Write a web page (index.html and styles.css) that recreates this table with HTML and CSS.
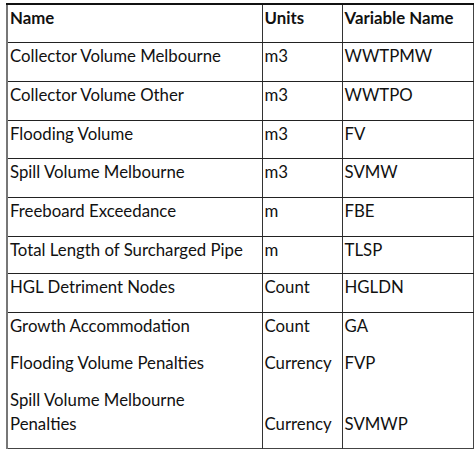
FILE: index.html
```html
<!DOCTYPE html>
<html>
<head>
<meta charset="utf-8">
<link rel="stylesheet" href="styles.css">
</head>
<body>
<table class="vars">
  <colgroup>
    <col class="c-name">
    <col class="c-units">
    <col class="c-var">
  </colgroup>
  <thead>
    <tr class="head">
      <th>Name</th><th>Units</th><th>Variable Name</th>
    </tr>
  </thead>
  <tbody>
    <tr class="row"><td>Collector Volume Melbourne</td><td>m3</td><td>WWTPMW</td></tr>
    <tr class="row"><td>Collector Volume Other</td><td>m3</td><td>WWTPO</td></tr>
    <tr class="row r38"><td>Flooding Volume</td><td>m3</td><td>FV</td></tr>
    <tr class="row"><td>Spill Volume Melbourne</td><td>m3</td><td>SVMW</td></tr>
    <tr class="row"><td>Freeboard Exceedance</td><td>m</td><td>FBE</td></tr>
    <tr class="row r37"><td>Total Length of Surcharged Pipe</td><td>m</td><td>TLSP</td></tr>
    <tr class="row"><td>HGL Detriment Nodes</td><td>Count</td><td>HGLDN</td></tr>
    <tr class="open"><td>Growth Accommodation</td><td>Count</td><td>GA</td></tr>
    <tr class="open"><td>Flooding Volume Penalties</td><td>Currency</td><td>FVP</td></tr>
    <tr class="open last"><td>Spill Volume Melbourne<br>Penalties</td><td class="low">Currency</td><td class="low">SVMWP</td></tr>
  </tbody>
</table>
</body>
</html>
```

FILE: styles.css
```css
html, body {
  margin: 0;
  padding: 0;
  background: #ffffff;
}

.vars {
  margin: 3px 0 0 6px;
  border-collapse: collapse;
  table-layout: fixed;
  width: 466px;
  font-family: Lato, "Open Sans", sans-serif;
  font-size: 16.8px;
  color: #111;
  border-top: 2px solid #111;
  border-left: 2px solid #777;
  border-right: 1px solid #444;
  border-bottom: 1px solid #444;
}

.c-name { width: 255px; }
.c-units { width: 80px; }
.c-var { width: 131px; }

.vars th,
.vars td {
  text-align: left;
  vertical-align: top;
  padding: 1px 0 0 2px;
  line-height: 24px;
  border-left: 1px solid #333;
}

.vars th:first-child,
.vars td:first-child {
  border-left: none;
}

.head th {
  font-weight: bold;
  height: 36px;
  border-bottom: 1px solid #222;
}

.row td {
  height: 37px;
  border-bottom: 1px solid #222;
}

.row.r38 td {
  height: 36px;
}

.row.r37 td {
  height: 35px;
}

.open td {
  height: 36px;
}

.last td {
  height: 60px;
}

.last td.low {
  padding-top: 25px;
  height: 36px;
}
```
